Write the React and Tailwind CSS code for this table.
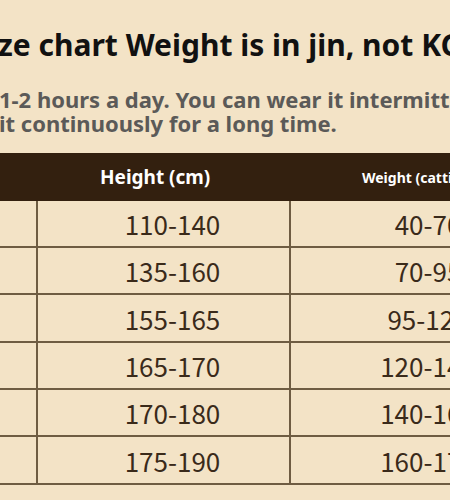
export default function App() {
  const rows = [
    ["110-140", "40-70", "h-[47px]"],
    ["135-160", "70-95", "h-[47px]"],
    ["155-165", "95-120", "h-[48px]"],
    ["165-170", "120-140", "h-[47px]"],
    ["170-180", "140-160", "h-[47px]"],
    ["175-190", "160-170", "h-[48px]"],
  ];
  return (
    <div className="w-[450px] h-[500px] overflow-hidden bg-[#f3e3c6] font-['Noto_Sans',sans-serif]">
      <div className="pt-[25px] ml-[-2px] whitespace-nowrap text-[30px] leading-[40px] font-bold text-[#111111]">
        ze chart Weight is in jin, not KG
      </div>
      <div className="mt-[22px] ml-[-1px] whitespace-nowrap text-[22px] leading-[24px] font-bold text-[#5b5a58]">
        <div>1-2 hours a day. You can wear it intermittently</div>
        <div>it continuously for a long time.</div>
      </div>
      <div className="mt-[18px] flex h-[48px] w-[700px] bg-[#33200f] items-center text-white font-bold">
        <div className="w-[289px] pl-[100px] text-[19px]">Height (cm)</div>
        <div className="pl-[73px] text-[14px]">Weight (catties)</div>
      </div>
      <div className="w-[700px] font-['Noto_Sans_CJK_SC',sans-serif] text-[26px] text-[#3a2a1a]">
        {rows.map(([h, w, cls]) => (
          <div key={h} className={`flex ${cls} border-b-2 border-[#6e5c42]`}>
            <div className="w-[36px] shrink-0" />
            <div className="w-[253px] shrink-0 border-l-2 border-[#6e5c42] flex items-center justify-center pl-[18px]">
              {h}
            </div>
            <div className="w-[276px] shrink-0 border-l-2 border-[#6e5c42] flex items-center justify-center">
              {w}
            </div>
          </div>
        ))}
      </div>
    </div>
  );
}
